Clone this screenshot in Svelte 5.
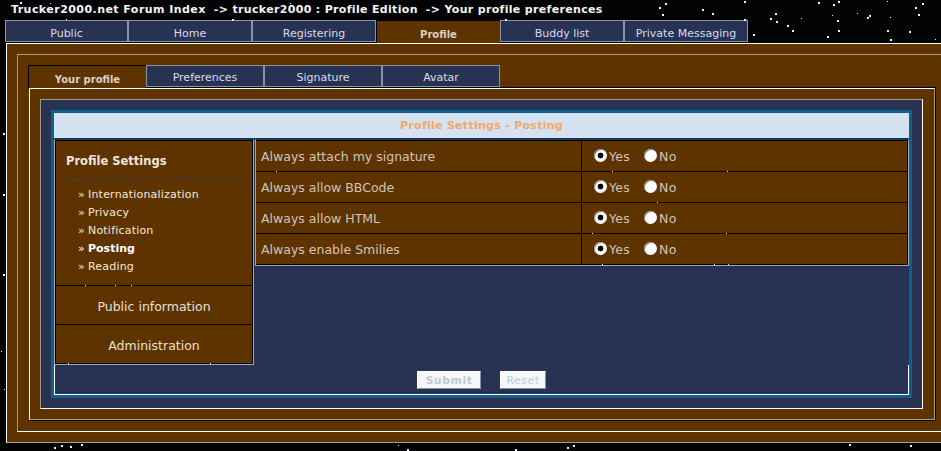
<script>
	const mainTabs = ['Public', 'Home', 'Registering', 'Profile', 'Buddy list', 'Private Messaging'];
	const subTabs = ['Your profile', 'Preferences', 'Signature', 'Avatar'];
	const links = ['Internationalization', 'Privacy', 'Notification', 'Posting', 'Reading'];
	const settings = ['Always attach my signature', 'Always allow BBCode', 'Always allow HTML', 'Always enable Smilies'];

	// stars of the page background, read off the reference: [x, y, size]
	const stars = [
		[659, 7, 2], [665, 3, 2], [662, 14, 2], [702, 9, 2], [712, 13, 2], [744, 1, 2], [744, 19, 2], [753, 34, 2],
		[775, 13, 2], [770, 18, 2], [776, 21, 2], [787, 25, 2], [792, 30, 2], [801, 18, 1], [818, 2, 2], [833, 4, 2],
		[838, 1, 2], [832, 15, 1], [837, 20, 2], [838, 30, 2], [827, 36, 2], [857, 13, 1], [869, 15, 2], [867, 17, 2],
		[890, 17, 1], [887, 30, 2], [890, 39, 2], [909, 31, 2], [915, 7, 2], [922, 3, 2], [918, 14, 2], [935, 39, 1],
		[887, 1, 1], [3, 133, 2], [3, 194, 2], [3, 274, 2], [4, 389, 1], [1, 351, 1], [54, 447, 2], [61, 445, 2],
		[70, 446, 2], [81, 444, 2], [398, 445, 1], [407, 449, 2], [567, 447, 2], [573, 445, 2], [515, 449, 2],
		[849, 444, 2], [910, 445, 2], [20, 2, 2], [50, 3, 1], [66, 19, 1], [232, 19, 2], [290, 3, 1], [505, 19, 2],
		[276, 171, 1], [612, 171, 1], [727, 171, 1], [657, 202, 1], [592, 233, 1], [726, 233, 1], [602, 264, 1],
		[714, 264, 1], [728, 264, 1], [85, 285, 1], [115, 285, 1], [131, 285, 1], [210, 363, 1], [68, 363, 1]
	];
</script>

<div class="page">
	<div class="breadcrumb">
		<span class="home">Trucker2000.net Forum Index</span>
		<span>-&gt; trucker2000 : Profile Edition</span>
		<span>-&gt; Your profile preferences</span>
	</div>

	<div class="main-tabs">
		{#each mainTabs as tab}
			<div class="tab" class:active={tab === 'Profile'}>{tab}</div>
		{/each}
	</div>

	<div class="outer">
		<div class="second">
			<div class="sub-tabs">
				{#each subTabs as tab}
					<div class="tab" class:active={tab === 'Your profile'}>{tab}</div>
				{/each}
			</div>

			<div class="panel">
				<div class="panel-inner">
					<div class="box">
						<div class="frame">
							<div class="box-title">Profile Settings - Posting</div>

							<div class="columns">
								<aside class="sidebar">
									<div class="side-group">
										<h3>Profile Settings</h3>
										<ul>
											{#each links as link}
												<li class:current={link === 'Posting'}><span class="arrow">»</span>{link}</li>
											{/each}
										</ul>
									</div>
									<div class="side-link">Public information</div>
									<div class="side-link">Administration</div>
								</aside>

								<div class="options">
									{#each settings as label, i}
										<div class="row">
											<div class="label">{label}</div>
											<div class="choices">
												<label><input type="radio" name={'opt' + i} checked />Yes</label>
												<label><input type="radio" name={'opt' + i} />No</label>
											</div>
										</div>
									{/each}
								</div>
							</div>

							<div class="actions">
								<button class="submit">Submit</button>
								<button>Reset</button>
							</div>
						</div>
					</div>
				</div>
			</div>
		</div>
	</div>

	<svg class="stars" width="941" height="451" aria-hidden="true">
		{#each stars as [x, y, s]}
			<rect {x} {y} width={s} height={s} fill="#e8f4ff" />
		{/each}
	</svg>
</div>

<style>
	:global(body) {
		margin: 0;
		background: #000;
	}

	.page {
		position: relative;
		width: 941px;
		height: 451px;
		overflow: hidden;
		background: #020305;
		font-family: 'DejaVu Sans', Verdana, sans-serif;
		font-size: 11px;
	}

	.stars {
		position: absolute;
		top: 0;
		left: 0;
		pointer-events: none;
	}

	.breadcrumb {
		display: flex;
		gap: 8px;
		height: 20px;
		padding: 3px 0 0 11px;
		box-sizing: border-box;
		font-weight: bold;
		line-height: 14px;
		letter-spacing: 0.33px;
		color: #f4f4f4;
		white-space: nowrap;
	}

	.breadcrumb .home {
		letter-spacing: 0.45px;
	}

	.tab {
		flex: none;
		box-sizing: border-box;
		text-align: center;
		background: #283252;
		border: 1px solid #8794a8;
		color: #d6dcf0;
	}

	.tab.active {
		background: #5f3300;
		border: 0;
		border-left: 1px solid #000;
		border-top: 1px solid #000;
		font-size: 10px;
		font-weight: bold;
		color: #d8d0c8;
	}

	.main-tabs {
		display: flex;
		height: 23px;
		padding-left: 5px;
	}

	.main-tabs .tab {
		width: 124px;
		height: 22px;
		padding-top: 6px;
		line-height: 14px;
	}

	.main-tabs .tab:first-child {
		width: 123px;
	}

	.main-tabs .tab.active {
		height: 23px;
		padding-top: 7px;
	}

	.outer {
		margin-left: 6px;
		width: 960px;
		height: 400px;
		box-sizing: border-box;
		background: #5f3300;
		border-top: 1px solid #fff;
		border-left: 1px solid #fff;
		border-bottom: 1px solid #a89a88;
		padding: 10px 0 10px 10px;
	}

	.second {
		height: 378px;
		box-sizing: border-box;
		border-top: 1px solid #a89a88;
		border-left: 1px solid #a89a88;
		border-bottom: 1px solid #fff;
		padding: 10px 0 0 10px;
	}

	.sub-tabs {
		display: flex;
		height: 22px;
	}

	.sub-tabs .tab {
		width: 118px;
		height: 22px;
		padding-top: 5px;
		line-height: 14px;
	}

	.sub-tabs .tab.active {
		height: 23px;
		padding-top: 7px;
		position: relative;
		z-index: 1;
	}

	.panel {
		width: 907px;
		box-sizing: border-box;
		margin-left: 1px;
		border: 1px solid #000;
		border-left: 0;
	}

	.panel-inner {
		height: 332px;
		box-sizing: border-box;
		border-top: 1px solid #fff;
		border-left: 1px solid #fff;
		border-right: 1px solid #a89a88;
		border-bottom: 1px solid #a89a88;
		padding: 10px 11px 10px 10px;
	}

	.box {
		height: 310px;
		box-sizing: border-box;
		background: #283252;
		border-top: 1px solid #a89a88;
		border-left: 1px solid #a89a88;
		border-right: 1px solid #fff;
		border-bottom: 1px solid #fff;
		padding: 10px;
	}

	.frame {
		height: 288px;
		box-sizing: border-box;
		border: 3px solid #0f5f8f;
	}

	.box-title {
		height: 26px;
		box-sizing: border-box;
		background: #d5e2f2;
		border-bottom: 1px solid #1a3350;
		color: #f4a864;
		font-weight: bold;
		text-align: center;
		letter-spacing: 0.28px;
		line-height: 26px;
	}

	.columns {
		display: flex;
		align-items: flex-start;
		gap: 1px;
		height: 226px;
	}

	.sidebar {
		flex: none;
		width: 200px;
		height: 226px;
		box-sizing: border-box;
		background: #5f3300;
		border: 1px solid #a0a8b4;
		border-top-color: #1a3350;
		box-shadow: inset 1px 1px 0 #000, inset -1px -1px 0 #000;
		color: #f0e8dc;
	}

	.side-group {
		height: 146px;
		box-sizing: border-box;
		padding: 14px 11px 0;
		border-bottom: 1px solid #000;
	}

	h3 {
		margin: 0;
		padding-bottom: 9px;
		border-bottom: 1px solid #44301f;
		font-size: 11.5px;
		line-height: 14px;
		color: #f0e6d8;
	}

	ul {
		list-style: none;
		margin: 0;
		padding: 8px 0 0 12px;
	}

	li {
		height: 18px;
		line-height: 18px;
		letter-spacing: 0.2px;
	}

	li.current {
		font-weight: bold;
		color: #fff;
		letter-spacing: 0;
	}

	.arrow {
		display: inline-block;
		width: 10px;
		font-weight: normal;
	}

	.side-link {
		height: 39px;
		box-sizing: border-box;
		border-bottom: 1px solid #000;
		text-align: center;
		font-size: 12.5px;
		line-height: 41px;
		color: #e8e0d4;
	}

	.side-link:last-child {
		border-bottom: 0;
	}

	.options {
		flex: 1;
		height: 127px;
		box-sizing: border-box;
		padding-top: 1px;
		background: #5f3300;
		border: 1px solid #a0a8b4;
		border-top-color: #1a3350;
		box-shadow: inset 0 1px 0 #000, inset -1px 0 0 #000;
		color: #d0c4b8;
	}

	.row {
		display: flex;
		height: 31px;
		box-sizing: border-box;
		border-bottom: 1px solid #000;
		font-size: 12.5px;
		line-height: 32px;
	}

	.label {
		width: 326px;
		box-sizing: border-box;
		padding-left: 5px;
		border-right: 1px solid #000;
	}

	.choices {
		display: flex;
		gap: 14px;
		padding-left: 12px;
		letter-spacing: 0.3px;
	}

	label {
		display: flex;
		align-items: center;
		gap: 2px;
		padding-top: 1px;
	}

	input {
		appearance: none;
		width: 13px;
		height: 13px;
		margin: 0 0 2px;
		border-radius: 50%;
		background: #fff;
		box-shadow: inset 1px 1px 0 #8a8478;
	}

	input:checked {
		background: radial-gradient(circle, #000 0 2.6px, #fff 3.2px);
	}

	.actions {
		height: 30px;
		box-sizing: border-box;
		padding-top: 6px;
		border-left: 1px solid #fff;
		border-right: 1px solid #fff;
		border-bottom: 1px solid #fff;
		display: flex;
		justify-content: center;
		gap: 19px;
	}

	button {
		width: 46px;
		height: 18px;
		padding: 0;
		box-sizing: border-box;
		border: 1px solid #8a8fa8;
		border-left-color: #fff;
		border-top-color: #fff;
		background: #f6f7fb;
		color: #c2c8dc;
		font: 11px 'DejaVu Sans', Verdana, sans-serif;
		letter-spacing: 0.5px;
	}

	button.submit {
		width: 64px;
		font-weight: bold;
	}
</style>
